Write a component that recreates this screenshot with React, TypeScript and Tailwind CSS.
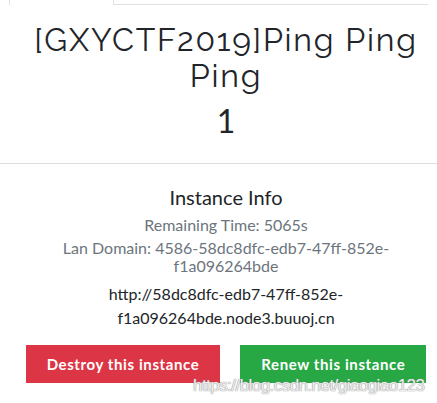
export default function App() {
  return (
    <div className="relative w-[437px] h-[403px] overflow-hidden bg-white font-['Lato',sans-serif] text-[#212529]">
      {/* tab strip, only its bottom edge is in view */}
      <div className="flex h-[5px] pl-[9px] pr-[9px]">
        <div className="w-[104px] border-l border-[#dee2e6]" />
        <div className="flex-1 border-l border-b border-[#dee2e6]" />
      </div>

      <div className="pl-[15px]">
        <h1 className="mt-[17px] text-center text-[32px] leading-[36px] font-normal tracking-[1.8px] font-['Raleway','Lato',sans-serif]">
          [GXYCTF2019]Ping Ping Ping
        </h1>
        <h2 className="mt-[9px] text-center text-[32px] leading-[36px] font-normal">1</h2>
      </div>

      <hr className="mt-[24px] border-t border-[#dddddd]" />

      <div className="pl-[15px]">
        <div className="mx-auto w-[400px] text-center">
          <h4 className="mt-[21px] text-[20px] leading-[24px] font-normal">Instance Info</h4>
          <p className="mt-[7px] text-[16px] leading-[18px] text-[#6c757d]">Remaining Time: 5065s</p>
          <p className="mt-[5px] text-[16px] leading-[18px] text-[#6c757d]">
            Lan Domain: 4586-58dc8dfc-edb7-47ff-852e-f1a096264bde
          </p>
          <p className="mt-[7px] text-[16px] leading-[24px]">
            http://58dc8dfc-edb7-47ff-852e-f1a096264bde.node3.buuoj.cn
          </p>
          <div className="mt-[15px] flex justify-center gap-5 whitespace-nowrap">
            <button className="shrink-0 h-[38px] px-[21px] bg-[#dc3545] text-white text-[15px] font-bold tracking-[0.6px]">
              Destroy this instance
            </button>
            <button className="shrink-0 h-[38px] px-[21px] bg-[#28a745] text-white text-[15px] font-bold tracking-[0.6px]">
              Renew this instance
            </button>
          </div>
        </div>
      </div>

      {/* blog watermark laid over the buttons */}
      <div className="absolute left-[193px] top-[373px] whitespace-nowrap font-['Liberation_Sans',sans-serif] text-[17px] tracking-[-0.55px] text-white/85 [text-shadow:0_0_1px_#8a8a8a,0_0_1px_#8a8a8a]">
        https://blog.csdn.net/giaogiao123
      </div>
    </div>
  )
}
